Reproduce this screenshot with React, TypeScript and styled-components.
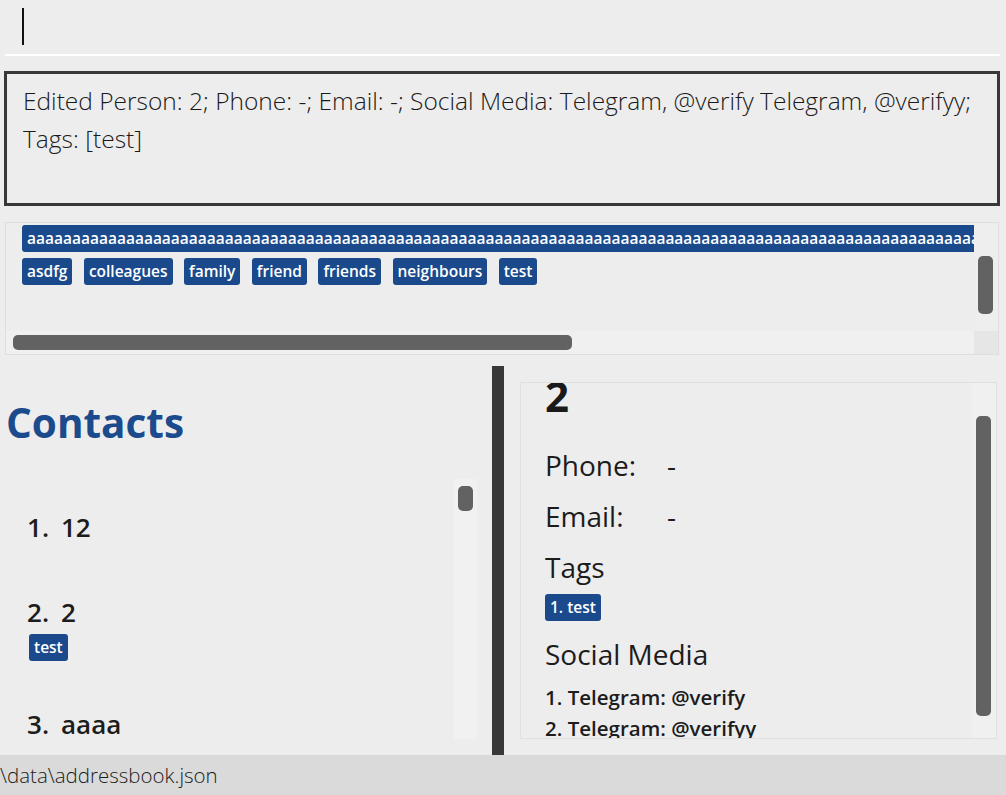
import React from 'react';
import styled, { createGlobalStyle } from 'styled-components';

const GlobalStyle = createGlobalStyle`
  html, body {
    margin: 0;
    padding: 0;
    background: #ededed;
    font-family: 'Open Sans', 'Noto Sans', sans-serif;
    color: #1c1c1c;
  }

  * {
    box-sizing: border-box;
  }
`;

const globalTags = ['asdfg', 'colleagues', 'family', 'friend', 'friends', 'neighbours', 'test'];

const contacts = [
  { index: 1, name: '12', tags: [] as string[] },
  { index: 2, name: '2', tags: ['test'] },
  { index: 3, name: 'aaaa', tags: [] as string[] },
];

const App: React.FC = () => {
  return (
    <Page>
      <GlobalStyle />

      <CommandBar>
        <Caret />
      </CommandBar>
      <CommandUnderline />

      <ResultBox>
        Edited Person: 2; Phone: -; Email: -; Social Media: Telegram, @verify Telegram, @verifyy;
        Tags: [test]
      </ResultBox>

      <TagPane>
        <TagViewport>
          <TagContent>
            <Chip>{'a'.repeat(190)}</Chip>
            {globalTags.map((tag) => (
              <Chip key={tag}>{tag}</Chip>
            ))}
          </TagContent>
        </TagViewport>
        <VTrack>
          <VThumb $top={33} $height={58} />
        </VTrack>
        <HTrack>
          <HThumb />
        </HTrack>
        <Corner />
      </TagPane>

      <Main>
        <ContactsPane>
          <Heading>Contacts</Heading>
          <ListArea>
            <ContactList>
              {contacts.map((c) => (
                <ContactCard key={c.index}>
                  <ContactName>
                    <Index>{c.index}.</Index>
                    {c.name}
                  </ContactName>
                  {c.tags.length > 0 && (
                    <ContactTags>
                      {c.tags.map((t) => (
                        <Chip key={t}>{t}</Chip>
                      ))}
                    </ContactTags>
                  )}
                </ContactCard>
              ))}
            </ContactList>
            <ListTrack>
              <VThumb $top={7} $height={25} />
            </ListTrack>
          </ListArea>
        </ContactsPane>

        <Divider />

        <DetailsPane>
          <DetailsCard>
            <DetailsContent>
              <PersonName>2</PersonName>
              <FieldRow $first>
                <FieldLabel>Phone:</FieldLabel>
                <span>-</span>
              </FieldRow>
              <FieldRow>
                <FieldLabel>Email:</FieldLabel>
                <span>-</span>
              </FieldRow>
              <FieldRow>Tags</FieldRow>
              <DetailTags>
                <Chip>1. test</Chip>
              </DetailTags>
              <FieldRow>Social Media</FieldRow>
              <SocialList>
                <SocialItem>1. Telegram: @verify</SocialItem>
                <SocialItem>2. Telegram: @verifyy</SocialItem>
              </SocialList>
            </DetailsContent>
            <CardTrack>
              <VThumb $top={33} $height={300} />
            </CardTrack>
          </DetailsCard>
        </DetailsPane>
      </Main>

      <StatusBar>\data\addressbook.json</StatusBar>
    </Page>
  );
};

export default App;

const Page = styled.div`
  display: flex;
  flex-direction: column;
  width: 1006px;
  height: 795px;
  overflow: hidden;
`;

const CommandBar = styled.div`
  height: 54px;
  padding: 8px 0 0 22px;
`;

const Caret = styled.div`
  width: 2px;
  height: 37px;
  background: #111;
`;

const CommandUnderline = styled.div`
  height: 2px;
  margin: 0 6px 0 5px;
  background: #ffffff;
`;

const ResultBox = styled.div`
  height: 135px;
  margin: 15px 6px 0 4px;
  padding: 8px 8px 8px 16px;
  border: 3px solid #383838;
  font-size: 24.5px;
  font-weight: 300;
  line-height: 38px;
  color: #1a1a1a;
`;

const TagPane = styled.div`
  display: grid;
  grid-template-columns: 1fr 24px;
  grid-template-rows: 1fr 23px;
  height: 133px;
  margin: 16px 7px 0 5px;
  border: 1px solid #dedede;
`;

const TagViewport = styled.div`
  overflow: hidden;
  padding: 2px 0 0 16px;
`;

const TagContent = styled.div`
  display: flex;
  flex-wrap: wrap;
  column-gap: 11.5px;
  row-gap: 6px;
  width: 1720px;
`;

const Chip = styled.span`
  display: inline-block;
  height: 27px;
  padding: 0 5px;
  border-radius: 3px;
  background: #1a4a8b;
  color: #fff;
  font-size: 15.5px;
  font-weight: 600;
  line-height: 27px;
  white-space: nowrap;
`;

const VTrack = styled.div`
  background: #eeeeee;
  padding-left: 4px;
`;

const VThumb = styled.div<{ $top: number; $height: number }>`
  width: 15px;
  height: ${(p) => p.$height}px;
  margin-top: ${(p) => p.$top}px;
  border-radius: 5px;
  background: #626262;
`;

const HTrack = styled.div`
  background: #f0f0f0;
  padding: 4px 0 0 7px;
`;

const HThumb = styled.div`
  width: 559px;
  height: 15px;
  border-radius: 5px;
  background: #626262;
`;

const Corner = styled.div`
  background: #e6e6e6;
`;

const Main = styled.div`
  display: flex;
  flex: 1;
  min-height: 0;
`;

const ContactsPane = styled.div`
  display: flex;
  flex-direction: column;
  width: 492px;
  padding-right: 15px;
`;

const Heading = styled.h1`
  margin: 40px 0 0 6px;
  font-size: 40.5px;
  font-weight: 700;
  line-height: normal;
  color: #1b4b8c;
`;

const ListArea = styled.div`
  display: grid;
  grid-template-columns: 1fr 23px;
  height: 260px;
  margin-top: 29px;
`;

const ContactList = styled.div`
  overflow: hidden;
  padding-left: 27px;
`;

const ContactCard = styled.div`
  padding: 31px 0 20px;
`;

const ContactName = styled.div`
  font-size: 26px;
  font-weight: 600;
  line-height: 34px;
  color: #1c1c1c;
`;

const Index = styled.span`
  margin-right: 12px;
`;

const ContactTags = styled.div`
  display: flex;
  gap: 8px;
  margin: 5px 0 -5px 2px;
`;

const ListTrack = styled.div`
  background: #f1f1f1;
  padding-left: 4px;
`;

const Divider = styled.div`
  width: 12px;
  margin-top: 11px;
  background: #383838;
`;

const DetailsPane = styled.div`
  flex: 1;
  padding: 27px 9px 16px 16px;
`;

const DetailsCard = styled.div`
  display: grid;
  grid-template-columns: 1fr 24px;
  height: 100%;
  border: 1px solid #e0e0e0;
`;

const DetailsContent = styled.div`
  overflow: hidden;
  padding-left: 24px;
`;

const PersonName = styled.div`
  margin-top: -16px;
  font-size: 42px;
  font-weight: 700;
  line-height: normal;
  color: #1a1a1a;
`;

const FieldRow = styled.div<{ $first?: boolean }>`
  display: flex;
  margin-top: ${(p) => (p.$first ? '16px' : '0')};
  font-size: 28px;
  font-weight: 400;
  line-height: 51px;
  color: #1c1c1c;
`;

const FieldLabel = styled.span`
  width: 122px;
`;

const DetailTags = styled.div`
  display: flex;
  margin: 1px 0 8px;
`;

const SocialList = styled.div`
  margin-top: 2px;
`;

const SocialItem = styled.div`
  font-size: 20.5px;
  font-weight: 600;
  line-height: 31px;
  color: #1c1c1c;
  white-space: nowrap;
`;

const CardTrack = styled.div`
  background: #f0f0f0;
  padding-left: 4px;
`;

const StatusBar = styled.div`
  height: 40px;
  flex-shrink: 0;
  background: #dadada;
  font-size: 20.5px;
  font-weight: 300;
  line-height: 40px;
  color: #1c1c1c;
  white-space: nowrap;
`;
